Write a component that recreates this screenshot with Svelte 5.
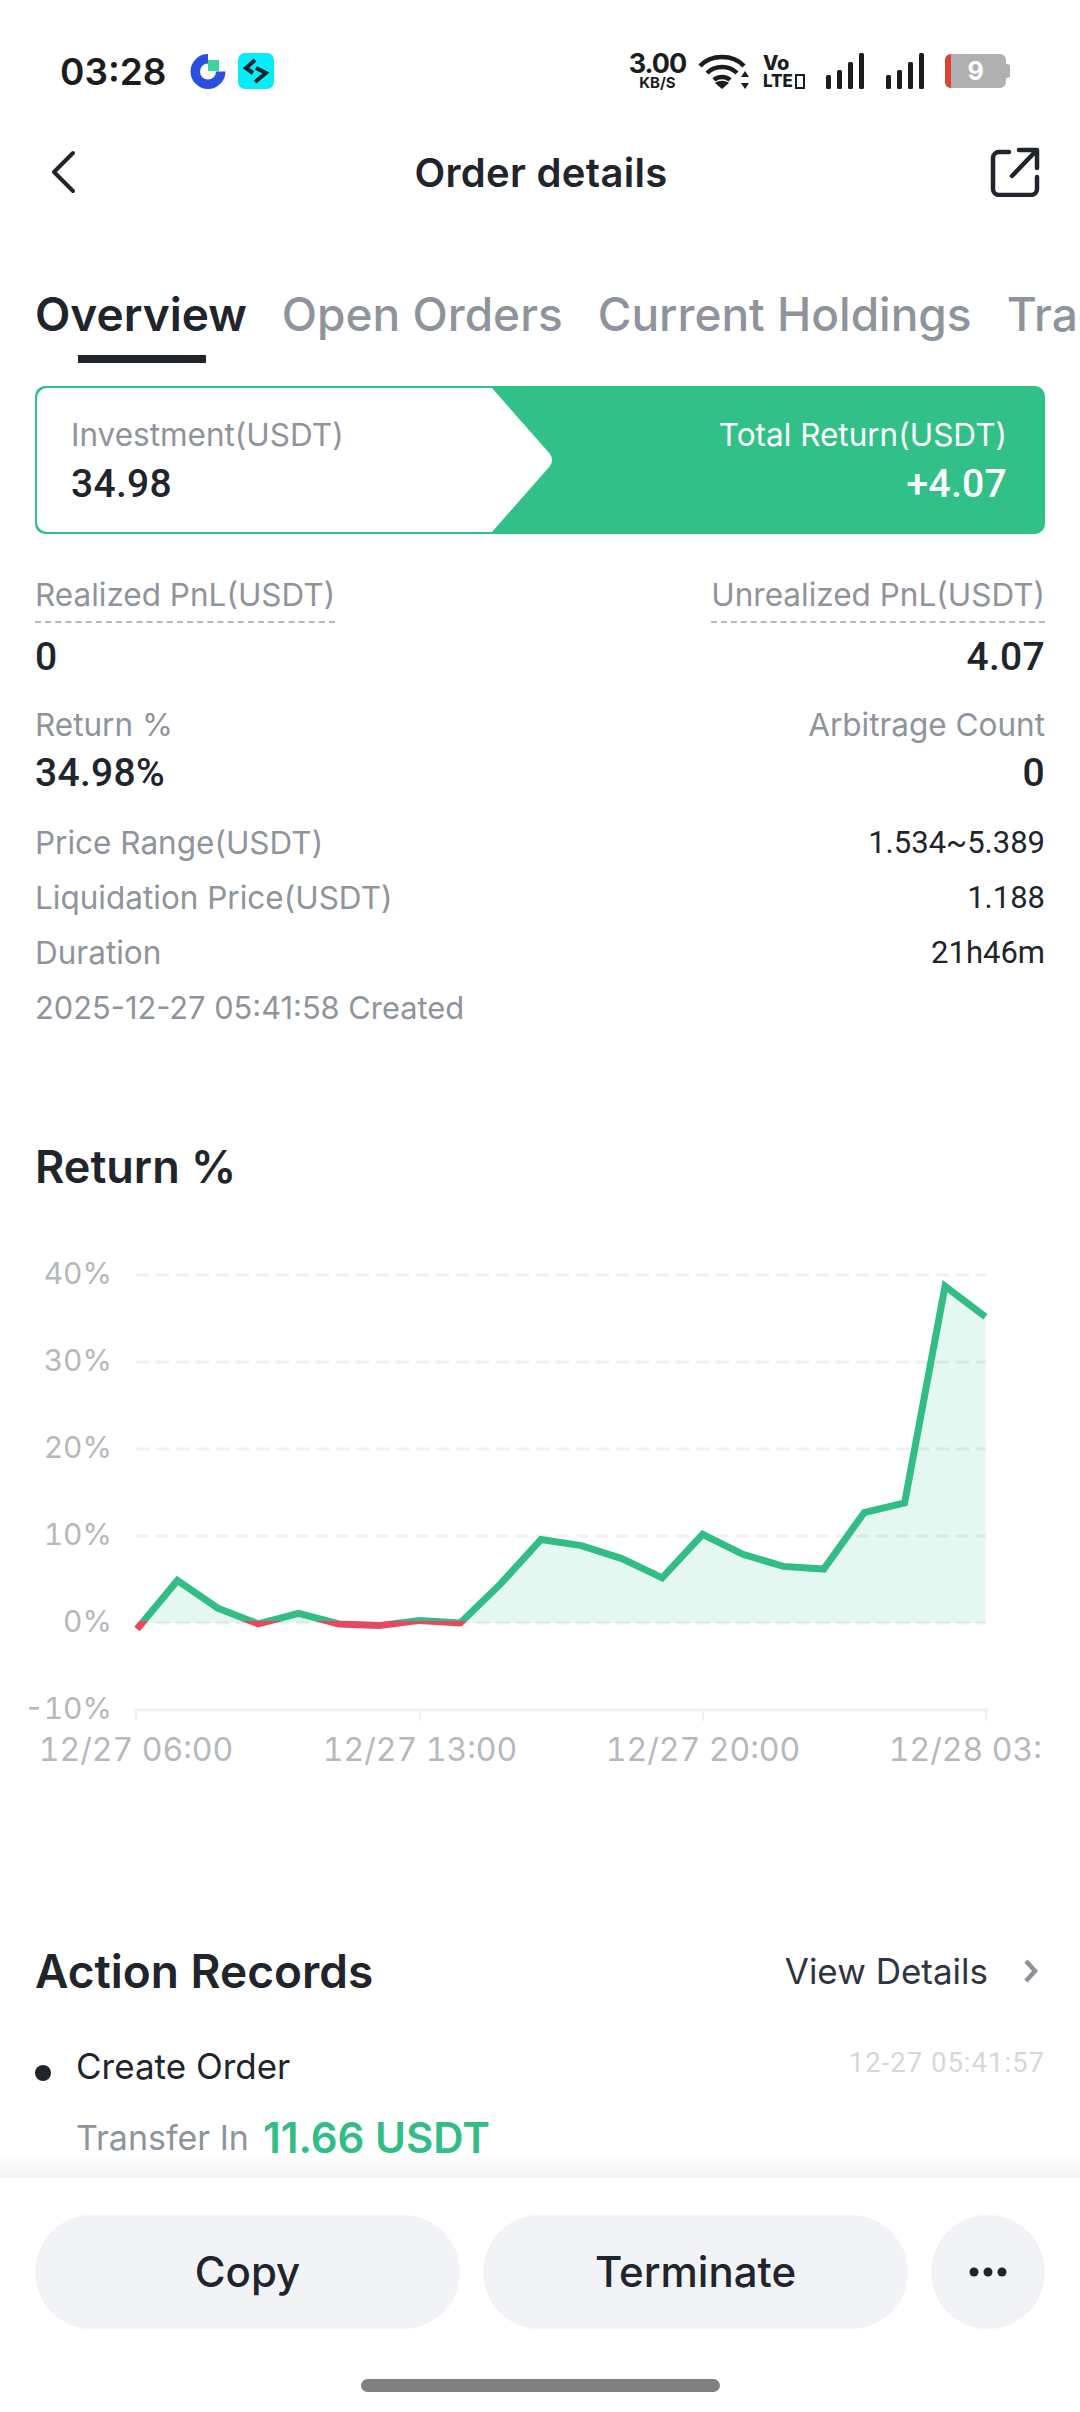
<script lang="ts">
  const values = [-0.7, 4.9, 1.7, -0.1, 1.1, -0.1, -0.3, 0.3, 0.0, 4.5, 9.6, 8.9, 7.4, 5.2, 10.2, 7.9, 6.5, 6.2, 12.7, 13.8, 38.7, 35.2];
  const chartLeft = 137;
  const step = 40.4;
  const zeroY = 402;
  const unit = 8.7;

  const points = values.map((v, i) => `${(chartLeft + i * step).toFixed(1)},${(zeroY - v * unit).toFixed(1)}`).join(" ");
  const area = `${chartLeft},${zeroY} ${points} ${chartLeft + (values.length - 1) * step},${zeroY}`;
  const grid = [40, 30, 20, 10, 0];
  const yLabels = [40, 30, 20, 10, 0, -10];
  const xTicks = [
    { x: 136, label: "12/27 06:00" },
    { x: 420, label: "12/27 13:00" },
    { x: 703, label: "12/27 20:00" },
    { x: 986, label: "12/28 03:00" }
  ];

  const stats = [
    { label: "Price Range(USDT)", value: "1.534~5.389" },
    { label: "Liquidation Price(USDT)", value: "1.188" },
    { label: "Duration", value: "21h46m" }
  ];
</script>

<div class="page">
  <div class="scroll">
    <div class="status">
      <span class="time">03:28</span>
      <svg class="logo" viewBox="0 0 36 36" width="36" height="36">
        <path d="M18 1a17.500 17.500 0 1 0 17.500 17.500H26a8 8 0 1 1-8-8z" fill="#2b50de" />
        <rect x="18" y="7" width="11" height="11" fill="#3ed6a0" />
      </svg>
      <svg class="logo second" viewBox="0 0 36 36" width="36" height="36">
        <rect width="36" height="36" rx="7" fill="#05eef8" />
        <path d="M17 7l-9 8 7 5M18 15l10 5-11 9" fill="none" stroke="#14242c" stroke-width="4" />
      </svg>
      <div class="status-right">
        <div class="speed"><span class="speed-num">3.00</span><span class="speed-unit">KB/S</span></div>
        <svg class="wifi" viewBox="0 0 52 36" width="52" height="36">
          <path d="M2 13C13 1 35 1 46 13M9 20c8-8 22-8 30 0M16 27c4-4 12-4 16 0" fill="none" stroke="#1c1c1c" stroke-width="4.500" />
          <path d="M24 36l-7-6c4-3 10-3 14 0z" fill="#1c1c1c" />
          <path d="M47 18l4 6h-8zM47 36l4-6h-8z" fill="#1c1c1c" />
        </svg>
        <div class="volte">
          <span class="vo">Vo</span>
          <span class="lte">LTE<i class="lte-box"></i></span>
        </div>
        <svg class="signal" viewBox="0 0 39 36" width="39" height="36">
          <g fill="#1c1c1c">
            <rect x="0" y="22" width="5" height="14" rx="1.500" />
            <rect x="11" y="17" width="5" height="19" rx="1.500" />
            <rect x="22" y="9" width="5" height="27" rx="1.500" />
            <rect x="33" y="0" width="5" height="36" rx="1.500" />
          </g>
        </svg>
        <svg class="signal" viewBox="0 0 39 36" width="39" height="36">
          <g fill="#1c1c1c">
            <rect x="0" y="22" width="5" height="14" rx="1.500" />
            <rect x="11" y="17" width="5" height="19" rx="1.500" />
            <rect x="22" y="9" width="5" height="27" rx="1.500" />
            <rect x="33" y="0" width="5" height="36" rx="1.500" />
          </g>
        </svg>
        <div class="battery"><span class="battery-low"></span><span class="battery-num">9</span></div>
        <span class="battery-nub"></span>
      </div>
    </div>

    <div class="header">
      <svg viewBox="0 0 26 44" width="26" height="44">
        <path d="M23 3L4 22l19 19" fill="none" stroke="#22242c" stroke-width="4" stroke-linecap="round" stroke-linejoin="round" />
      </svg>
      <span class="title">Order details</span>
      <svg viewBox="0 0 50 50" width="50" height="50">
        <path d="M19 5H9a6 6 0 0 0-6 6v31a6 6 0 0 0 6 6h32a6 6 0 0 0 6-6V30" fill="none" stroke="#22242c" stroke-width="4.500" stroke-linecap="round" />
        <path d="M22 29L46 4M29 3h18v18" fill="none" stroke="#22242c" stroke-width="4.500" stroke-linecap="round" stroke-linejoin="round" />
      </svg>
    </div>

    <div class="tabs">
      <span class="tab active">Overview</span>
      <span class="tab">Open Orders</span>
      <span class="tab">Current Holdings</span>
      <span class="tab">Trade History</span>
    </div>

    <div class="content">
      <div class="pnl-card">
        <svg class="pnl-shape" viewBox="0 0 560 148" width="560" height="148">
          <path d="M12 2H457L515 68Q519 74 515 80L457 146H12A10 10 0 0 1 2 136V12A10 10 0 0 1 12 2z" fill="#fff" />
        </svg>
        <div class="pnl-col">
          <span class="label">Investment(USDT)</span>
          <span class="num big dark">34.98</span>
        </div>
        <div class="pnl-col right white">
          <span class="label">Total Return(USDT)</span>
          <span class="num big">+4.07</span>
        </div>
      </div>

      <div class="row pair first">
        <div class="col">
          <span class="label dashed">Realized PnL(USDT)</span>
          <span class="num big dark">0</span>
        </div>
        <div class="col right">
          <span class="label dashed">Unrealized PnL(USDT)</span>
          <span class="num big dark">4.07</span>
        </div>
      </div>

      <div class="row pair second-pair">
        <div class="col">
          <span class="label">Return %</span>
          <span class="num big dark">34.98%</span>
        </div>
        <div class="col right">
          <span class="label">Arbitrage Count</span>
          <span class="num big dark">0</span>
        </div>
      </div>

      <div class="stats">
        {#each stats as s}
          <div class="row stat">
            <span class="label">{s.label}</span>
            <span class="num small">{s.value}</span>
          </div>
        {/each}
        <div class="row stat">
          <span class="label created">2025-12-27 05:41:58 Created</span>
        </div>
      </div>

      <h2 class="section return-title">Return %</h2>
    </div>

    <svg class="chart" viewBox="0 0 1080 552" width="1080" height="552">
      <defs>
        <clipPath id="above"><rect x="0" y="0" width="1080" height={zeroY} /></clipPath>
        <clipPath id="line-above"><rect x="0" y="0" width="1080" height={zeroY - 2} /></clipPath>
        <clipPath id="line-below"><rect x="0" y={zeroY - 2} width="1080" height="98" /></clipPath>
        <clipPath id="plot"><rect x="0" y="0" width="1042" height="552" /></clipPath>
      </defs>
      {#each grid as g}
        <line x1="136" x2="986" y1={zeroY - g * unit} y2={zeroY - g * unit} stroke="#eff1f3" stroke-width="3" stroke-dasharray="13 7" />
      {/each}
      <polygon points={area} fill="#32c089" fill-opacity="0.13" clip-path="url(#above)" />
      <polyline points={points} fill="none" stroke="#32bd87" stroke-width="7" stroke-linejoin="miter" clip-path="url(#line-above)" />
      <polyline points={points} fill="none" stroke="#e8475f" stroke-width="7" stroke-linejoin="miter" clip-path="url(#line-below)" />
      {#each yLabels as y}
        <text class="axis y-axis" x="112" y={zeroY - y * unit + 9} text-anchor="end">{y}%</text>
      {/each}
      <line x1="135" x2="988" y1="489" y2="489" stroke="#eff1f3" stroke-width="3" />
      {#each xTicks as t}
        <line x1={t.x} x2={t.x} y1="489" y2="500" stroke="#eff1f3" stroke-width="2" />
      {/each}
      <g clip-path="url(#plot)">
        {#each xTicks as t}
          <text class="axis" x={t.x} y="540" text-anchor="middle">{t.label}</text>
        {/each}
      </g>
    </svg>

    <div class="content">
      <div class="row records-head">
        <h2 class="section big-section">Action Records</h2>
        <div class="view">
          <span>View Details</span>
          <svg viewBox="0 0 18 26" width="18" height="26">
            <path d="M4 3l9 10-9 10" fill="none" stroke="#8d9299" stroke-width="4.500" />
          </svg>
        </div>
      </div>
      <div class="row record">
        <div class="record-name"><span class="dot"></span><span>Create Order</span></div>
        <span class="record-time">12-27 05:41:57</span>
      </div>
      <div class="transfer"><span class="label transfer-label">Transfer In</span> <b>11.66 USDT</b></div>
    </div>
  </div>

  <div class="bottom">
    <div class="actions">
      <button>Copy</button>
      <button>Terminate</button>
      <button class="more" aria-label="More">
        <svg viewBox="0 0 40 12" width="40" height="12">
          <circle cx="6" cy="6" r="4.500" fill="#22242c" />
          <circle cx="20" cy="6" r="4.500" fill="#22242c" />
          <circle cx="34" cy="6" r="4.500" fill="#22242c" />
        </svg>
      </button>
    </div>
    <div class="home"></div>
  </div>
</div>

<style>
  :global(body) {
    margin: 0;
    background: #fff;
  }

  .page {
    width: 1080px;
    height: 2412px;
    display: flex;
    flex-direction: column;
    overflow: hidden;
    font-family: Inter, "Noto Sans", sans-serif;
    color: #22242c;
    background: #fff;
  }

  .scroll {
    flex: 1;
    min-height: 0;
    overflow: hidden;
  }

  .status {
    height: 36px;
    margin-top: 53px;
    padding: 0 70px 0 60px;
    display: flex;
    align-items: center;
  }

  .time {
    font-size: 37px;
    font-weight: 600;
    color: #1c1c1c;
    margin-right: 24px;
  }

  .logo.second {
    margin-left: 12px;
  }

  .status-right {
    margin-left: auto;
    display: flex;
    align-items: center;
  }

  .speed {
    width: 57px;
    display: flex;
    flex-direction: column;
    align-items: center;
    color: #1c1c1c;
    font-weight: 700;
    line-height: 1;
  }

  .speed-num {
    font-size: 27px;
    line-height: 22px;
    letter-spacing: -1px;
  }

  .speed-unit {
    font-size: 15px;
    line-height: 15px;
  }

  .wifi {
    margin-left: 12px;
  }

  .volte {
    width: 47px;
    margin-left: 13px;
    display: flex;
    flex-direction: column;
    font-weight: 800;
    color: #1c1c1c;
    line-height: 1;
  }

  .vo {
    font-size: 20px;
    line-height: 20px;
  }

  .lte {
    display: flex;
    align-items: center;
    font-size: 17px;
    line-height: 16px;
    white-space: nowrap;
  }

  .lte-box {
    width: 6px;
    height: 11px;
    margin-left: 2px;
    border: 2px solid #1c1c1c;
  }

  .signal {
    margin-left: 16px;
  }

  .signal + .signal {
    margin-left: 21px;
  }

  .battery {
    position: relative;
    width: 61px;
    height: 34px;
    margin-left: 20px;
    border-radius: 6px;
    background: #b0b0b0;
    overflow: hidden;
    display: flex;
    align-items: center;
    justify-content: center;
    color: #fff;
    font-size: 25px;
    font-weight: 700;
  }

  .battery-low {
    position: absolute;
    left: 0;
    top: 0;
    bottom: 0;
    width: 6px;
    background: #db4433;
  }

  .battery-nub {
    width: 4px;
    height: 14px;
    border-radius: 0 3px 3px 0;
    background: #b0b0b0;
  }

  .header {
    height: 50px;
    margin-top: 58px;
    padding: 0 40px 0 50px;
    display: flex;
    align-items: center;
    justify-content: space-between;
  }

  .title {
    margin-left: 16px;
    font-size: 40px;
    font-weight: 600;
    letter-spacing: 0.3px;
  }

  .tabs {
    margin-top: 89px;
    padding-left: 35px;
    display: flex;
    gap: 35px;
    white-space: nowrap;
    overflow: hidden;
  }

  .tab {
    position: relative;
    flex: none;
    font-size: 46px;
    font-weight: 500;
    line-height: 56px;
    padding-bottom: 21px;
    color: #8f949c;
  }

  .tab.active {
    color: #22242c;
    font-weight: 600;
  }

  .tab.active::after {
    content: "";
    position: absolute;
    left: 43px;
    right: 41px;
    bottom: 0;
    height: 8px;
    background: #22242c;
  }

  .content {
    padding: 0 35px;
  }

  .pnl-card {
    position: relative;
    box-sizing: border-box;
    height: 148px;
    margin-top: 23px;
    padding: 30px 38px 0 36px;
    border-radius: 10px;
    background: #32c089;
    display: flex;
    justify-content: space-between;
  }

  .pnl-shape {
    position: absolute;
    left: 0;
    top: 0;
  }

  .pnl-col {
    position: relative;
    display: flex;
    flex-direction: column;
    gap: 8px;
  }

  .right {
    align-items: flex-end;
    text-align: right;
  }

  .white .label,
  .white .num {
    color: #fff;
  }

  .label {
    font-size: 31.5px;
    line-height: 38px;
    color: #8f949c;
    white-space: nowrap;
  }

  .label.created {
    font-size: 30.8px;
  }

  .num {
    font-family: Roboto, "Noto Sans", sans-serif;
    color: #fff;
  }

  .num.big {
    font-size: 39px;
    line-height: 44px;
    font-weight: 500;
    letter-spacing: 0.3px;
  }

  .num.small {
    font-size: 31px;
    line-height: 38px;
    color: #22242c;
  }

  .num.dark {
    color: #22242c;
  }

  .row {
    display: flex;
    justify-content: space-between;
  }

  .col {
    display: flex;
    flex-direction: column;
  }

  .pair.first {
    margin-top: 42px;
  }

  .second-pair {
    margin-top: 27px;
  }

  .second-pair .col {
    gap: 7px;
  }

  .dashed {
    padding-bottom: 7px;
    margin-bottom: 12px;
    border-bottom: 2px dashed #b5b8bd;
  }

  .stats {
    margin-top: 29px;
    display: flex;
    flex-direction: column;
    gap: 17px;
  }

  .stat .label {
    line-height: 38px;
  }

  .section {
    margin: 0;
    font-size: 45px;
    line-height: 56px;
    font-weight: 600;
    color: #22242c;
  }

  .big-section {
    font-size: 46px;
  }

  .return-title {
    margin-top: 112px;
  }

  .chart {
    display: block;
    margin-top: 26px;
  }

  .axis {
    font-family: Inter, sans-serif;
    font-size: 32px;
    font-variant-numeric: tabular-nums;
    fill: #b5b8bd;
  }

  .y-axis {
    font-size: 30px;
  }

  .records-head {
    margin-top: 170px;
    align-items: center;
  }

  .view {
    display: flex;
    align-items: center;
    gap: 34px;
    padding-right: 5px;
    font-size: 35px;
    color: #303440;
  }

  .record {
    margin-top: 45px;
  }

  .record-name {
    display: flex;
    align-items: center;
    font-size: 35px;
    line-height: 44px;
  }

  .dot {
    width: 16px;
    height: 16px;
    margin: 14px 25px 0 0;
    border-radius: 50%;
    background: #22242c;
  }

  .record-time {
    font-family: Roboto, sans-serif;
    font-size: 27.5px;
    line-height: 38px;
    letter-spacing: 1px;
    color: #d5d7da;
  }

  .transfer {
    margin: 26px 0 0 41px;
    display: flex;
    align-items: center;
    gap: 14px;
  }

  .transfer-label {
    font-size: 34px;
  }

  .transfer b {
    font-size: 42px;
    line-height: 48px;
    font-weight: 600;
    color: #32bd87;
  }

  .bottom {
    position: relative;
    flex: none;
    height: 234px;
    box-sizing: border-box;
    padding: 37px 35px 0;
    background: #fff;
  }

  .bottom::before {
    content: "";
    position: absolute;
    left: 0;
    right: 0;
    top: -26px;
    height: 26px;
    background: linear-gradient(to bottom, rgba(240, 242, 246, 0), #f3f4f7);
  }

  .actions {
    display: flex;
    gap: 23px;
  }

  button {
    flex: 1;
    height: 114px;
    border: none;
    border-radius: 57px;
    background: #f1f3f7;
    font-family: Inter, sans-serif;
    font-size: 42px;
    font-weight: 500;
    line-height: 112px;
    color: #22242c;
    padding: 0;
  }

  button.more {
    flex: none;
    width: 114px;
    display: flex;
    align-items: center;
    justify-content: center;
  }

  .home {
    width: 359px;
    height: 13px;
    margin: 50px auto 0;
    border-radius: 7px;
    background: #808080;
  }
</style>
